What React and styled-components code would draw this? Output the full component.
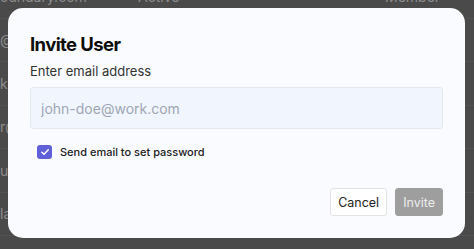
import React from 'react'
import styled, { createGlobalStyle } from 'styled-components'

const GlobalStyle = createGlobalStyle`
    * { box-sizing: border-box; }
    html, body {
        margin: 0;
        padding: 0;
        background: #4a4a4a;
        font-family: Inter, "Noto Sans", sans-serif;
    }
`;

const rows = [
    { email: 'oundary.com', status: 'Active', role: 'Member' },
    { email: '@boundary.com', status: 'Active', role: 'Member' },
    { email: 'kai@boundary.com', status: 'Active', role: 'Member' },
    { email: 'r@boundary.com', status: 'Invited', role: 'Admin' },
    { email: 'ue@boundary.com', status: 'Active', role: 'Member' },
    { email: 'la@boundary.com', status: 'Active', role: 'Member' },
];

function App() {
    return (
        <Page>
            <GlobalStyle />
            <Table>
                {rows.map((row, i) => (
                    <Row key={i}>
                        <EmailCell>{row.email}</EmailCell>
                        <StatusCell>{row.status}</StatusCell>
                        <RoleCell>{row.role}</RoleCell>
                    </Row>
                ))}
            </Table>
            <Overlay>
                <Modal>
                    <Title>Invite User</Title>
                    <Label>Enter email address</Label>
                    <Input placeholder="john-doe@work.com" />
                    <CheckRow>
                        <Check>
                            <svg width="10" height="10" viewBox="0 0 10 10">
                                <path d="M1.8 5.2 L4 7.3 L8.3 2.8" fill="none" stroke="#fff" strokeWidth="1.5" strokeLinecap="round" strokeLinejoin="round" />
                            </svg>
                        </Check>
                        <CheckText>Send email to set password</CheckText>
                    </CheckRow>
                    <Actions>
                        <Button>Cancel</Button>
                        <Button $primary disabled>Invite</Button>
                    </Actions>
                </Modal>
            </Overlay>
        </Page>
    )
}

export default App

const Page = styled.div`
    position: relative;
    width: 474px;
    height: 249px;
    overflow: hidden;
    background: #4a4a4a;
`;

const Table = styled.div`
    display: flex;
    flex-direction: column;
    margin-top: -25px;
`;

const Row = styled.div`
    display: grid;
    grid-template-columns: 138px 247px 1fr;
    height: 43.5px;
    align-items: center;
    border-bottom: 1px solid #525252;
    color: #8c8c8c;
    font-size: 14px;
`;

const EmailCell = styled.span`
    white-space: nowrap;
`;

const StatusCell = styled.span``;

const RoleCell = styled.span``;

const Overlay = styled.div`
    position: absolute;
    inset: 0;
    display: flex;
    padding: 8px 9px 11px 8px;
`;

const Modal = styled.div`
    flex: 1;
    display: flex;
    flex-direction: column;
    background: #fafbfe;
    border-radius: 15px;
    padding: 25px 22px 22px;
`;

const Title = styled.h2`
    margin: 0;
    font-size: 18.5px;
    line-height: 22px;
    font-weight: 700;
    letter-spacing: -0.6px;
    color: #0d0d0d;
`;

const Label = styled.div`
    margin-top: 6.5px;
    font-size: 13px;
    line-height: 18px;
    color: #333;
`;

const Input = styled.input`
    margin-top: 7.5px;
    height: 42px;
    border: 1px solid #e3e7ee;
    border-radius: 3px;
    background: #f1f5fd;
    padding: 0 10px;
    font-family: inherit;
    font-size: 14px;
    color: #333;
    outline: none;
    &::placeholder {
        color: #9ea6b6;
    }
`;

const CheckRow = styled.div`
    display: flex;
    align-items: center;
    gap: 8px;
    margin-top: 16px;
    padding-left: 7px;
    height: 14px;
`;

const Check = styled.span`
    width: 15px;
    height: 14px;
    border-radius: 3px;
    background: #5f5fd8;
    display: flex;
    align-items: center;
    justify-content: center;
`;

const CheckText = styled.span`
    font-size: 11px;
    font-weight: 500;
    color: #222;
`;

const Actions = styled.div`
    display: flex;
    justify-content: flex-end;
    gap: 8px;
    margin-top: 29px;
`;

const Button = styled.button`
    height: 28px;
    padding: 0 7px;
    border-radius: 3px;
    font-family: inherit;
    font-size: 12.5px;
    border: 1px solid ${p => p.$primary ? '#9e9e9e' : '#e3e3e3'};
    background: ${p => p.$primary ? '#9e9e9e' : '#fff'};
    color: ${p => p.$primary ? '#ececec' : '#222'};
`;
